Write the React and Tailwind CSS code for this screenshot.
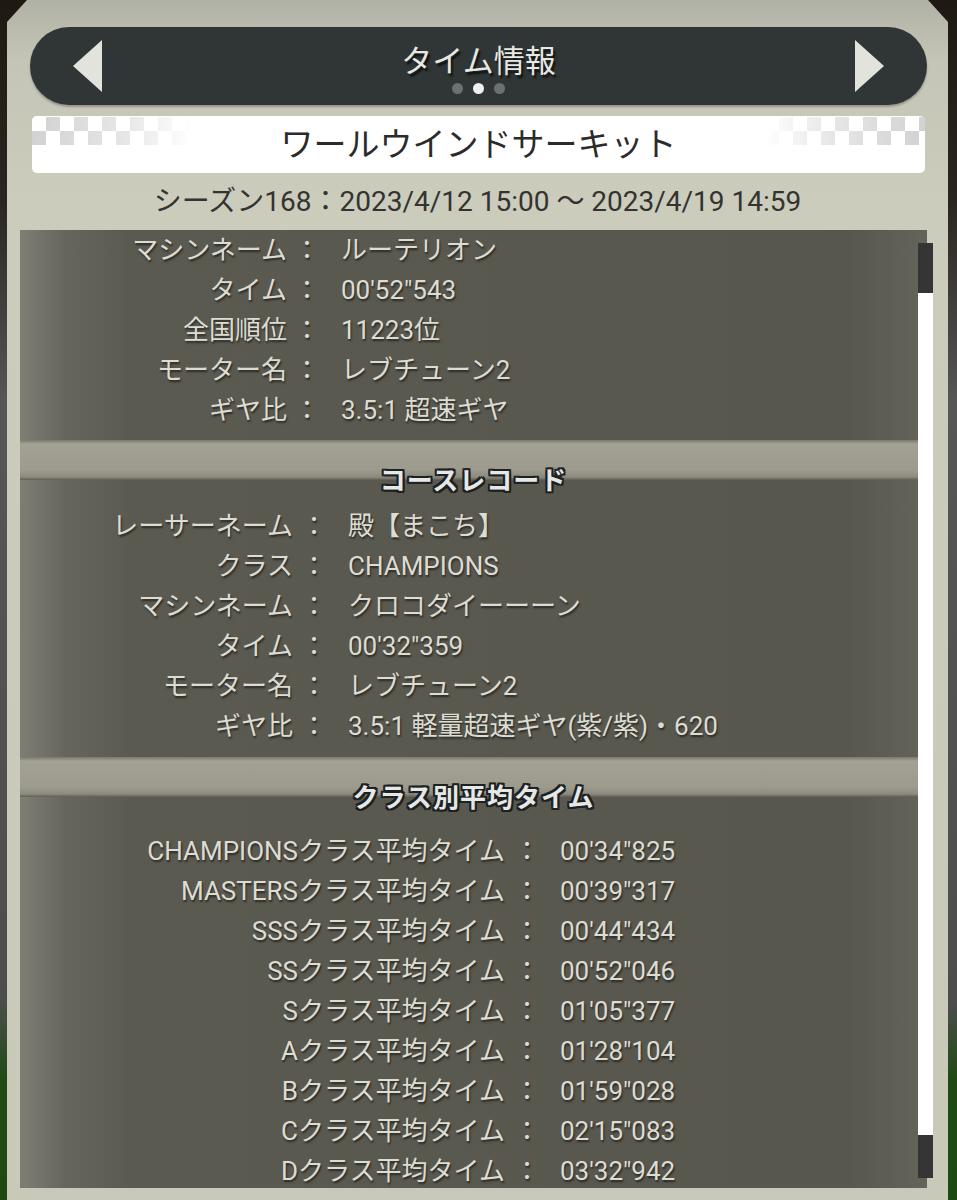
import React from "react";

// コース情報データ
const myRecord = [
  ["マシンネーム", "ルーテリオン"],
  ["タイム", "00'52\"543"],
  ["全国順位", "11223位"],
  ["モーター名", "レブチューン2"],
  ["ギヤ比", "3.5:1 超速ギヤ"],
];

const courseRecord = [
  ["レーサーネーム", "殿【まこち】"],
  ["クラス", "CHAMPIONS"],
  ["マシンネーム", "クロコダイーーーン"],
  ["タイム", "00'32\"359"],
  ["モーター名", "レブチューン2"],
  ["ギヤ比", "3.5:1 軽量超速ギヤ(紫/紫)・620"],
];

const classAverages = [
  ["CHAMPIONSクラス平均タイム", "00'34\"825"],
  ["MASTERSクラス平均タイム", "00'39\"317"],
  ["SSSクラス平均タイム", "00'44\"434"],
  ["SSクラス平均タイム", "00'52\"046"],
  ["Sクラス平均タイム", "01'05\"377"],
  ["Aクラス平均タイム", "01'28\"104"],
  ["Bクラス平均タイム", "01'59\"028"],
  ["Cクラス平均タイム", "02'15\"083"],
  ["Dクラス平均タイム", "03'32\"942"],
];

const Row = ({ label, value, cols, valuePad }) => (
  <div className={`grid h-[40px] items-center text-[26px] leading-none text-[#dddcd3] [text-shadow:1px_2px_2px_rgba(0,0,0,0.55)] ${cols}`}>
    <span className="text-right whitespace-nowrap">{label}</span>
    <span className="text-center">：</span>
    <span className={`whitespace-nowrap ${valuePad}`}>{value}</span>
  </div>
);

// 区切りバー + 見出し
const SectionHeader = ({ title }) => (
  <div>
    <div className="h-[40px] bg-[linear-gradient(to_bottom,#7b796d_0px,#a3a194_4px,#9d9b8d_30px,#8d8b7d_37px,#5f5e55_40px)]" />
    <div className="-mt-[12px] text-center text-[26px] leading-[26px] font-bold tracking-[1px] text-[#e6e8e8] [text-shadow:-2px_0_0_#1d2121,2px_0_0_#1d2121,0_-2px_0_#1d2121,0_2px_0_#1d2121,-2px_-2px_0_#1d2121,2px_2px_0_#1d2121,-2px_2px_0_#1d2121,2px_-2px_0_#1d2121]">
      {title}
    </div>
  </div>
);

const Triangle = ({ dir }) => (
  <svg width="32" height="54" viewBox="0 0 32 54">
    {dir === "left" ? (
      <polygon points="1,27 30,1 30,53" fill="#e2e3dd" />
    ) : (
      <polygon points="2,1 31,27 2,53" fill="#e2e3dd" />
    )}
  </svg>
);

export default function App() {
  return (
    <div className="w-[957px] h-[1200px] overflow-hidden bg-[linear-gradient(to_bottom,#1e1912_0px,#2a2520_200px,#565656_400px,#4d4d4d_1000px,#1f4a14_1080px,#1d4a12_1200px)] px-[7px] font-['Roboto','Noto_Sans_CJK_JP',sans-serif]">
      <div className="relative h-[1200px] w-[941px] [clip-path:polygon(20px_0,calc(100%-20px)_0,100%_22px,100%_100%,0_100%,0_22px)] bg-[linear-gradient(to_bottom,#b1b2a6_0px,#c4c5b6_60px,#cbccbc_200px,#c8c9b9_1200px)] pt-[27px]">
        {/* ヘッダーバー */}
        <div className="ml-[23px] mr-[21px] h-[78px] rounded-full bg-[#303636] shadow-[0_2px_2px_rgba(0,0,0,0.25)] flex items-center justify-between px-[42px]">
          <Triangle dir="left" />
          <div className="flex flex-col items-center pt-[6px]">
            <div className="text-[31px] leading-[34px] text-[#e8e8e2] [text-shadow:2px_3px_2px_rgba(0,0,0,0.7)]">タイム情報</div>
            <div className="mt-[4px] flex gap-[10px]">
              <span className="h-[11px] w-[11px] rounded-full bg-[#6b7070]" />
              <span className="h-[11px] w-[11px] rounded-full bg-[#efefef]" />
              <span className="h-[11px] w-[11px] rounded-full bg-[#6b7070]" />
            </div>
          </div>
          <Triangle dir="right" />
        </div>

        {/* コース名バナー */}
        <div className="relative mt-[11px] ml-[25px] mr-[23px] h-[57px] rounded-[5px] bg-white overflow-hidden flex items-center justify-center">
          <div className="absolute left-0 top-[1px] h-[28px] w-[160px] bg-[repeating-conic-gradient(#cacaca_0_25%,#ffffff_0_50%)] bg-[length:28px_28px] [mask-image:linear-gradient(to_right,rgba(0,0,0,0.85),rgba(0,0,0,0.45)_60%,transparent)]" />
          <div className="absolute right-0 top-[1px] h-[28px] w-[160px] bg-[repeating-conic-gradient(#cacaca_0_25%,#ffffff_0_50%)] bg-[length:28px_28px] [mask-image:linear-gradient(to_left,rgba(0,0,0,0.85),rgba(0,0,0,0.45)_60%,transparent)]" />
          <span className="relative text-[33px] leading-none text-[#2b2b2b]">ワールウインドサーキット</span>
        </div>

        {/* シーズン期間 */}
        <div className="h-[57px] flex items-center justify-center text-[28px] leading-none text-[#333331]">
          シーズン168：2023/4/12 15:00 〜 2023/4/19 14:59
        </div>

        {/* 詳細パネル */}
        <div className="relative ml-[13px] w-[907px] h-[958px]">
          <div className="h-full overflow-hidden bg-[linear-gradient(to_right,#7f7e74_0px,#67665d_45px,#5b5a51_110px,#58574e_calc(100%-80px),#65645a_100%)]">
            {myRecord.map(([l, v]) => (
              <Row key={l} label={l} value={v} cols="grid-cols-[267px_40px_1fr]" valuePad="pl-[14px]" />
            ))}
            <div className="h-[10px]" />
            <SectionHeader title="コースレコード" />
            <div className="h-[12px]" />
            {courseRecord.map(([l, v]) => (
              <Row key={l} label={l} value={v} cols="grid-cols-[273px_42px_1fr]" valuePad="pl-[13px]" />
            ))}
            <div className="h-[11px]" />
            <SectionHeader title="クラス別平均タイム" />
            <div className="h-[20px]" />
            {classAverages.map(([l, v]) => (
              <Row key={l} label={l} value={v} cols="grid-cols-[485px_44px_1fr]" valuePad="pl-[11px]" />
            ))}
          </div>

          {/* スクロールバー */}
          <div className="absolute right-[-6px] top-[13px] bottom-[10px] w-[15px] flex flex-col bg-white">
            <div className="h-[50px] bg-[#353535]" />
            <div className="flex-1" />
            <div className="h-[43px] bg-[#353535]" />
          </div>
        </div>
      </div>
    </div>
  );
}
